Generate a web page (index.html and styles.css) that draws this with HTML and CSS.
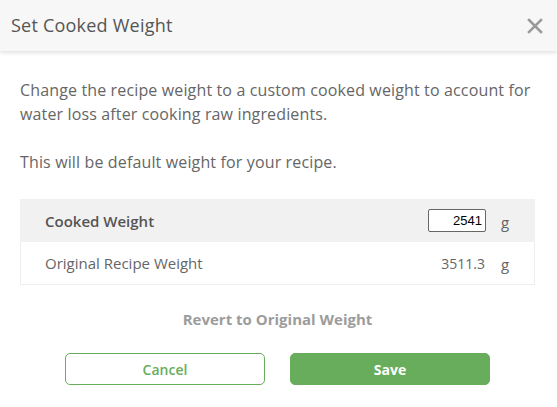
FILE: index.html
```html
<!DOCTYPE html>
<html>
<head>
<meta charset="utf-8">
<link rel="stylesheet" href="styles.css">
</head>
<body>
<div class="modal">
  <div class="modal-header">
    <h1 class="modal-title">Set Cooked Weight</h1>
    <button class="close" aria-label="Close">
      <svg width="16" height="16" viewBox="0 0 16 16"><path d="M2 2 L14 14 M14 2 L2 14" stroke="#9a9a9a" stroke-width="2.6" stroke-linecap="square"/></svg>
    </button>
  </div>
  <div class="modal-body">
    <p class="desc">Change the recipe weight to a custom cooked weight to account for water loss after cooking raw ingredients.</p>
    <p class="desc">This will be default weight for your recipe.</p>
    <div class="weights">
      <div class="row row-cooked">
        <span class="label">Cooked Weight</span>
        <input class="weight-input" type="text" value="2541">
        <span class="unit">g</span>
      </div>
      <div class="row row-original">
        <span class="label">Original Recipe Weight</span>
        <span class="value">3511.3</span>
        <span class="unit">g</span>
      </div>
    </div>
    <div class="revert">Revert to Original Weight</div>
    <div class="actions">
      <button class="btn btn-cancel">Cancel</button>
      <button class="btn btn-save">Save</button>
    </div>
  </div>
</div>
</body>
</html>
```

FILE: styles.css
```css
html, body {
  margin: 0;
  padding: 0;
  background: #fff;
}
body {
  font-family: "Open Sans", "Liberation Sans", sans-serif;
  color: #666;
}
.modal {
  width: 557px;
  height: 407px;
  overflow: hidden;
}
.modal-header {
  height: 51px;
  background: #f7f7f7;
  box-shadow: 0 2px 4px rgba(0,0,0,0.12);
  display: flex;
  align-items: center;
  justify-content: space-between;
  padding: 0 14px 0 11px;
  position: relative;
}
.modal-title {
  margin: 0;
  font-size: 18px;
  font-weight: 400;
  color: #555;
  line-height: 24px;
  letter-spacing: 0.22px;
  position: relative;
  top: -1px;
}
.close {
  border: 0;
  background: none;
  padding: 0;
  width: 16px;
  height: 16px;
  display: flex;
}
.modal-body {
  padding: 27px 22px 0 20px;
}
.desc {
  margin: 0 0 24px;
  font-size: 16px;
  line-height: 24px;
  color: #666;
  letter-spacing: 0.14px;
}
.desc + .desc {
  margin-bottom: 25px;
}
.weights {
  border: 1px solid #ededed;
  border-top: 0;
}
.row {
  height: 43px;
  display: flex;
  align-items: center;
  padding: 0 24px 0 24px;
  font-size: 15px;
}
.row-cooked {
  background: #f1f1f1;
  margin: 0 -1px;
  padding: 0 25px 0 25px;
}
.row-cooked .label {
  font-weight: 600;
  color: #555;
}
.row-original {
  height: 42px;
}
.label {
  flex: 1;
}
.weight-input {
  width: 50px;
  height: 17px;
  border: 1px solid #666;
  border-radius: 2px;
  padding: 2px 3px;
  font-family: "Liberation Sans", Arial, sans-serif;
  font-size: 13px;
  text-align: right;
  color: #000;
  background: #fff;
  margin: 0;
}
.value {
  font-size: 14px;
  color: #666;
  margin-right: 1px;
}
.unit {
  width: 9px;
  margin-left: 15px;
  font-size: 15px;
  color: #666;
  position: relative;
  top: 1px;
}
.revert {
  text-align: center;
  font-size: 15px;
  font-weight: 700;
  color: #9c9c9c;
  margin-top: 24px;
  line-height: 20px;
}
.actions {
  display: flex;
  gap: 25px;
  justify-content: center;
  margin-top: 24px;
}
.btn {
  width: 200px;
  height: 32px;
  border-radius: 5px;
  font-family: "Open Sans", "Liberation Sans", sans-serif;
  font-size: 14px;
  font-weight: 700;
  cursor: pointer;
  padding: 0;
}
.btn-cancel {
  background: #fff;
  border: 1px solid #68ad5c;
  color: #68ad5c;
  font-weight: 600;
}
.btn-save {
  background: #68ad5c;
  border: 1px solid #68ad5c;
  color: #fff;
}
```
